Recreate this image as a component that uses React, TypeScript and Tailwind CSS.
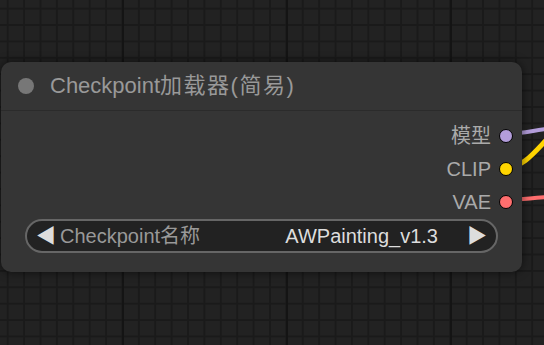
const FONT = { fontFamily: '"Liberation Sans", Arial, "Noto Sans CJK SC", sans-serif' };

const outputs = [
  { label: "模型", color: "bg-[#b39ddb]" },
  { label: "CLIP", color: "bg-[#ffd500]" },
  { label: "VAE", color: "bg-[#ff6e6e]" },
];

export default function App() {
  return (
    <div
      className="relative w-[544px] h-[345px] overflow-hidden bg-[#222222] bg-[linear-gradient(90deg,transparent_122px,#141414_122px,#141414_124px,transparent_124px),linear-gradient(90deg,transparent_7px,#1a1a1a_7px,#1a1a1a_9px,transparent_9px),linear-gradient(0deg,transparent_6px,#1a1a1a_6px,#1a1a1a_8px,transparent_8px)] bg-[length:164px_100%,16.4px_16.4px,16.4px_16.4px] bg-[position:0_0,0_0,0_-1px]"
      style={FONT}
    >
      {/* wires */}
      <svg className="absolute inset-0" width="544" height="345">
        <path d="M506 134 C 520 134, 530 131, 560 127" stroke="#b39ddb" strokeWidth="4" fill="none" />
        <path d="M506 168 C 526 166, 534 152, 554 132" stroke="#ffd500" strokeWidth="5" fill="none" />
        <path d="M506 200 C 520 200, 530 198, 560 196" stroke="#ff6e6e" strokeWidth="4" fill="none" />
      </svg>

      {/* node */}
      <div className="absolute left-[1px] top-[62px] w-[521px] h-[210px] rounded-[10px] bg-[#353535] shadow-[0_0_10px_rgba(0,0,0,0.6)] flex flex-col">
        <div className="h-[49px] flex items-center gap-[16px] pl-[17px] border-b border-[#2b2b2b]">
          <span className="w-[16px] h-[16px] rounded-full bg-[#777777]" />
          <span className="text-[22px] text-[#999999] leading-none">
            Checkpoint<span className="tracking-[1.5px]">加载器(简易)</span>
          </span>
        </div>

        <div className="flex flex-col items-end pr-[9px] pt-[12px] gap-[7px]">
          {outputs.map((o) => (
            <div key={o.label} className="h-[26px] flex items-center gap-[8px]">
              <span className="text-[20px] text-[#aaaaaa] leading-none">{o.label}</span>
              <span className={`w-[14px] h-[14px] rounded-full border-[1.5px] border-black ${o.color}`} />
            </div>
          ))}
        </div>

        <div className="mx-[24px] mt-[4px] h-[34px] rounded-full border-2 border-[#666666] bg-[#222222] flex items-center px-[9px] text-[20px] leading-none">
          <span className="text-[#dddddd] text-[20px]">◀</span>
          <span className="ml-[4px] text-[#999999]">Checkpoint名称</span>
          <span className="ml-auto text-[#dddddd]">AWPainting_v1.3</span>
          <span className="ml-[29px] text-[#dddddd] text-[20px]">▶</span>
        </div>
      </div>
    </div>
  );
}
